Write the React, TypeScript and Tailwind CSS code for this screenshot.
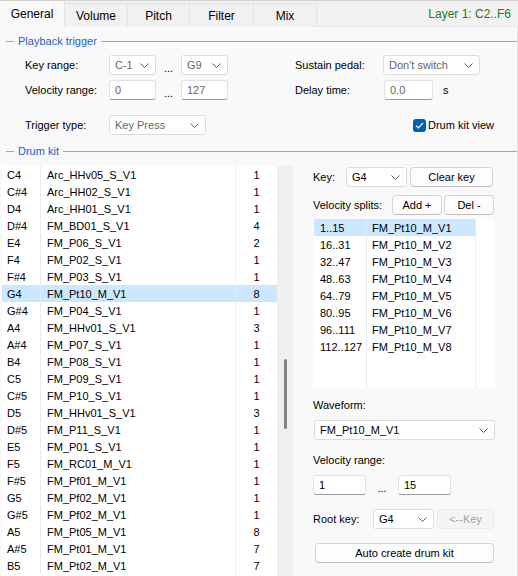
import React from "react";

const drums: [string, string, number][] = [
  ["C4", "Arc_HHv05_S_V1", 1],
  ["C#4", "Arc_HH02_S_V1", 1],
  ["D4", "Arc_HH01_S_V1", 1],
  ["D#4", "FM_BD01_S_V1", 4],
  ["E4", "FM_P06_S_V1", 2],
  ["F4", "FM_P02_S_V1", 1],
  ["F#4", "FM_P03_S_V1", 1],
  ["G4", "FM_Pt10_M_V1", 8],
  ["G#4", "FM_P04_S_V1", 1],
  ["A4", "FM_HHv01_S_V1", 3],
  ["A#4", "FM_P07_S_V1", 1],
  ["B4", "FM_P08_S_V1", 1],
  ["C5", "FM_P09_S_V1", 1],
  ["C#5", "FM_P10_S_V1", 1],
  ["D5", "FM_HHv01_S_V1", 3],
  ["D#5", "FM_P11_S_V1", 1],
  ["E5", "FM_P01_S_V1", 1],
  ["F5", "FM_RC01_M_V1", 1],
  ["F#5", "FM_Pf01_M_V1", 1],
  ["G5", "FM_Pf02_M_V1", 1],
  ["G#5", "FM_Pf02_M_V1", 1],
  ["A5", "FM_Pt05_M_V1", 8],
  ["A#5", "FM_Pt01_M_V1", 7],
  ["B5", "FM_Pt02_M_V1", 7],
];

const splits = ["1..15", "16..31", "32..47", "48..63", "64..79", "80..95", "96..111", "112..127"];

const tabs = [
  { name: "General", w: "w-[65px]" },
  { name: "Volume", w: "w-[63px]" },
  { name: "Pitch", w: "w-[62px]" },
  { name: "Filter", w: "w-[64px]" },
  { name: "Mix", w: "w-[63px]" },
];

function Chevron() {
  return (
    <svg width="9" height="5" viewBox="0 0 9 5" className="shrink-0">
      <path d="M0.5 0.5 L4.5 4.5 L8.5 0.5" fill="none" stroke="#5f5f5f" strokeWidth="1" />
    </svg>
  );
}

function Combo({ value, w, muted }: { value: string; w: string; muted?: boolean }) {
  return (
    <div
      className={`${w} h-[20px] flex items-center justify-between bg-white border border-[#dcdcdc] rounded-[3px] pl-[5px] pr-[6px] ${
        muted ? "text-[#666]" : "text-black"
      }`}
    >
      <span>{value}</span>
      <Chevron />
    </div>
  );
}

function Field({ value, w, muted }: { value: string; w: string; muted?: boolean }) {
  return (
    <div
      className={`${w} h-[20px] flex items-center bg-white border border-[#e2e2e2] border-b-[#9a9a9a] rounded-[3px] pl-[5px] ${
        muted ? "text-[#666]" : "text-black"
      }`}
    >
      {value}
    </div>
  );
}

function Button({ label, w, disabled }: { label: string; w: string; disabled?: boolean }) {
  return (
    <div
      className={`${w} h-[20px] flex items-center justify-center rounded-[4px] border ${
        disabled
          ? "bg-[#f5f5f5] border-[#ececec] text-[#a3a3a3]"
          : "bg-[#fdfdfd] border-[#d4d4d4] border-b-[#c0c0c0] text-black"
      }`}
    >
      {label}
    </div>
  );
}

function GroupTitle({ title }: { title: string }) {
  return (
    <div className="flex items-center h-[14px] pl-[6px]">
      <div className="w-[8px] h-px bg-[#a6a6a6]" />
      <span className="px-[4px] text-[#1a5fd0]">{title}</span>
      <div className="flex-1 h-px bg-[#a6a6a6]" />
    </div>
  );
}

export default function App() {
  return (
    <div className="w-[518px] h-[576px] overflow-hidden bg-[#f9f9f9] text-[11px] leading-[14px] text-black font-['Liberation_Sans',Arial,sans-serif]">
      {/* tab strip */}
      <div className="flex h-[27px] bg-[#f1f1f1] border-t border-[#d2d2d2]">
        {tabs.map((t, i) =>
          i === 0 ? (
            <div
              key={t.name}
              className={`${t.w} h-[26px] flex items-center justify-center bg-[#f9f9f9] border-r border-[#e3e3e3] text-[12px]`}
            >
              {t.name}
            </div>
          ) : (
            <div
              key={t.name}
              className={`${t.w} mt-[2px] h-[24px] flex items-center justify-center border-r border-t border-[#e3e3e3] text-[12px]`}
            >
              {t.name}
            </div>
          )
        )}
        <div className="flex-1 flex items-center justify-end pr-[7px] text-[#1b7a2a] text-[12px] border-b border-[#e6e6e6]">
          Layer 1: C2..F6
        </div>
      </div>

      <div className="border-r border-[#e0e0e0]">
        {/* playback trigger */}
        <div className="pt-[7px]">
          <GroupTitle title="Playback trigger" />
          <div className="flex items-center mt-[7px] pl-[25px]">
            <span className="w-[84px]">Key range:</span>
            <Combo value="C-1" w="w-[47px]" muted />
            <span className="w-[25px] text-center self-end">...</span>
            <Combo value="G9" w="w-[47px]" muted />
            <span className="w-[67px]" />
            <span className="w-[88px]">Sustain pedal:</span>
            <Combo value="Don't switch" w="w-[97px]" muted />
          </div>
          <div className="flex items-center mt-[5px] pl-[25px]">
            <span className="w-[84px]">Velocity range:</span>
            <Field value="0" w="w-[47px]" muted />
            <span className="w-[25px] text-center self-end">...</span>
            <Field value="127" w="w-[47px]" muted />
            <span className="w-[67px]" />
            <span className="w-[89px]">Delay time:</span>
            <Field value="0.0" w="w-[49px]" muted />
            <span className="ml-[10px]">s</span>
          </div>
          <div className="flex items-center mt-[15px] pl-[25px]">
            <span className="w-[84px]">Trigger type:</span>
            <Combo value="Key Press" w="w-[97px]" muted />
            <span className="w-[207px]" />
            <div className="w-[13px] h-[13px] rounded-[3px] bg-[#005fb8] flex items-center justify-center">
              <svg width="9" height="7" viewBox="0 0 9 7">
                <path d="M1 3.6 L3.3 5.8 L8 1" fill="none" stroke="white" strokeWidth="1.2" />
              </svg>
            </div>
            <span className="ml-[2px]">Drum kit view</span>
          </div>
        </div>

        {/* drum kit */}
        <div className="pt-[9px]">
          <GroupTitle title="Drum kit" />
          <div className="flex mt-[8px] pl-[2px] border-b border-[#c8c8c8]">
            {/* drum list */}
            <div className="w-[275px] h-[410px] bg-white">
              {drums.map(([note, name, count]) => (
                <div
                  key={note}
                  className={`flex h-[17px] items-center ${note === "G4" ? "bg-[#cce8ff]" : ""}`}
                >
                  <span className="w-[39px] pl-[5px] h-full flex items-center border-r border-[#e3edf8]">{note}</span>
                  <span className="w-[195px] pl-[6px] h-full flex items-center border-r border-[#e3edf8]">{name}</span>
                  <span className="flex-1 text-center">{count}</span>
                </div>
              ))}
            </div>
            {/* scrollbar */}
            <div className="w-[16px] h-[410px] bg-[#f0f0f0] flex justify-center">
              <div className="w-[3px] h-[70px] mt-[193px] rounded-full bg-[#858585]" />
            </div>

            {/* right pane */}
            <div className="flex-1 pl-[20px] pt-[1px]">
              <div className="flex items-center">
                <span className="w-[33px]">Key:</span>
                <Combo value="G4" w="w-[61px]" />
                <span className="w-[3px]" />
                <Button label="Clear key" w="w-[83px]" />
              </div>
              <div className="flex items-center mt-[8px]">
                <span className="w-[79px]">Velocity splits:</span>
                <Button label="Add +" w="w-[50px]" />
                <span className="w-[2px]" />
                <Button label="Del -" w="w-[50px]" />
              </div>
              <div className="ml-[1px] mt-[4px] w-[180px] h-[168px] bg-white flex">
                <div className="w-[53px] h-full border-r border-[#e3edf8]">
                  {splits.map((s, i) => (
                    <div key={s} className={`h-[17px] flex items-center pl-[6px] ${i === 0 ? "bg-[#cce8ff]" : ""}`}>
                      {s}
                    </div>
                  ))}
                </div>
                <div className="w-[109px] h-full border-r border-[#e3edf8]">
                  {splits.map((s, i) => (
                    <div key={s} className={`h-[17px] flex items-center pl-[5px] ${i === 0 ? "bg-[#cce8ff]" : ""}`}>
                      FM_Pt10_M_V{i + 1}
                    </div>
                  ))}
                </div>
              </div>
              <div className="mt-[11px]">Waveform:</div>
              <div className="mt-[8px] ml-[1px]">
                <Combo value="FM_Pt10_M_V1" w="w-[181px]" />
              </div>
              <div className="mt-[13px]">Velocity range:</div>
              <div className="flex items-center mt-[8px]">
                <Field value="1" w="w-[53px]" />
                <span className="w-[32px] text-center self-end">...</span>
                <Field value="15" w="w-[53px]" />
              </div>
              <div className="flex items-center mt-[14px]">
                <span className="w-[60px]">Root key:</span>
                <Combo value="G4" w="w-[61px]" />
                <span className="w-[3px]" />
                <Button label="<--Key" w="w-[57px]" disabled />
              </div>
              <div className="mt-[14px] ml-[2px]">
                <Button label="Auto create drum kit" w="w-[179px]" />
              </div>
            </div>
          </div>
        </div>
      </div>
    </div>
  );
}
